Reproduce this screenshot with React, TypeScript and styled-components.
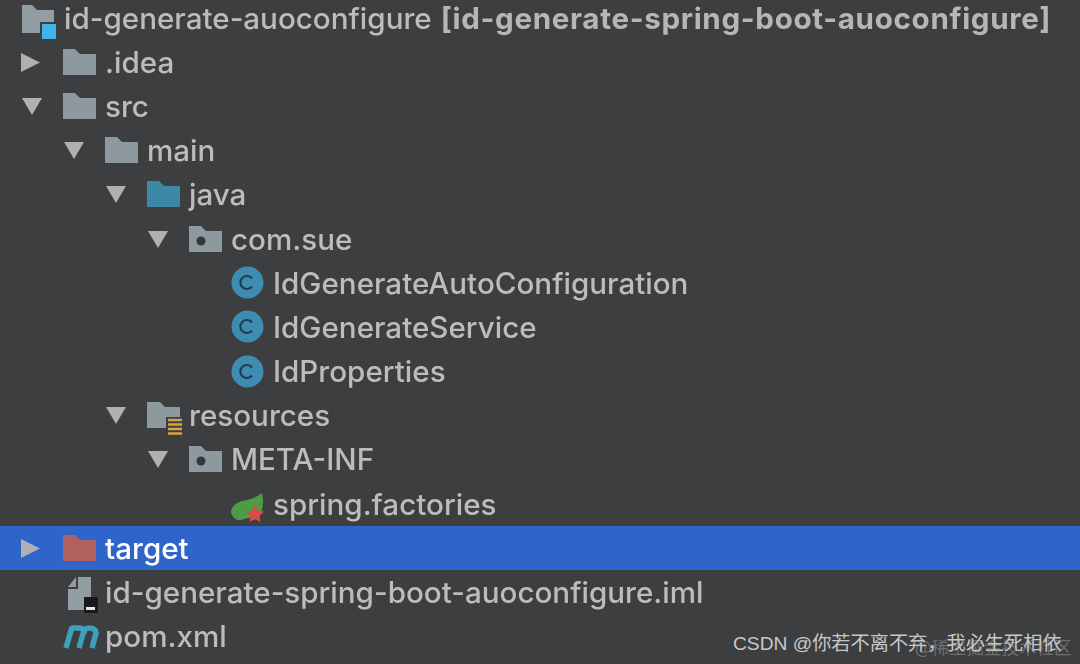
import React from 'react';
import styled, { createGlobalStyle } from 'styled-components';

const GlobalStyle = createGlobalStyle`
  html, body {
    margin: 0;
    height: 100%;
    background: #3c3e40;
  }
`;

const Page = styled.div`
  position: relative;
  width: 1080px;
  height: 664px;
  overflow: hidden;
  background: #3c3e40;
`;

const Tree = styled.ul`
  list-style: none;
  margin: -4.5px 0 0;
  padding: 0;
  filter: blur(0.6px);
  font-family: Inter, 'Liberation Sans', sans-serif;
  font-size: 29.6px;
  font-weight: 500;
  color: #bcbcbc;
`;

const Row = styled.li<{ $indent: number; $selected?: boolean }>`
  display: flex;
  align-items: center;
  height: 44.2px;
  padding-left: ${(p) => 21 + p.$indent * 42}px;
  white-space: nowrap;
  background: ${(p) => (p.$selected ? '#2f65ca' : 'transparent')};
  color: ${(p) => (p.$selected ? '#ffffff' : '#bcbcbc')};
`;

const ArrowSlot = styled.span`
  flex: none;
  display: flex;
  width: 42px;
`;

const IconSlot = styled.span`
  flex: none;
  display: flex;
  width: 42px;
`;

const RootIconSlot = styled(IconSlot)`
  width: 43px;
`;

const Module = styled.b`
  margin-left: 9px;
  font-weight: 700;
  letter-spacing: 0.66px;
  color: #b6b6b6;
`;

const Watermark = styled.div`
  position: absolute;
  left: 733px;
  top: 631px;
  font-family: 'Liberation Sans', 'Noto Sans CJK SC', sans-serif;
  font-size: 19.2px;
  line-height: 26px;
  color: #c8c8c8;
  white-space: nowrap;
`;

const FaintMark = styled.div`
  position: absolute;
  left: 915px;
  top: 634px;
  font-family: 'Noto Sans CJK SC', sans-serif;
  font-size: 17.5px;
  line-height: 26px;
  color: #6c6e70;
  white-space: nowrap;
`;

const Arrow = ({ open }: { open?: boolean }) => (
  <svg width="22" height="22" viewBox="0 0 22 22">
    {open ? <path d="M1 3h20L11 20z" fill="#aeb0b1" /> : <path d="M0 2l19 9.500L0 21z" fill="#aeb0b1" />}
  </svg>
);

const Folder = ({ color = '#8d999f', dot }: { color?: string; dot?: boolean }) => (
  <svg width="33" height="26" viewBox="0 0 33 26">
    <path d="M0 0h12l5 5h16v21H0z" fill={color} />
    {dot && <circle cx="12" cy="15" r="4.500" fill="#33383a" />}
  </svg>
);

const ModuleIcon = () => (
  <svg width="36" height="44" viewBox="0 0 36 44">
    <path d="M1 9h10l5 5h17v23H1z" fill="#929ea4" />
    <rect x="19" y="26" width="17" height="18" fill="#3c3e40" />
    <rect x="21" y="28" width="14" height="15" fill="#40b3e8" />
  </svg>
);

const ResourcesIcon = () => (
  <svg width="36" height="40" viewBox="0 0 36 40">
    <path d="M0 7h13l5 5h15v21H0z" fill="#8d999f" />
    <rect x="19" y="22" width="17" height="18" fill="#3c3e40" />
    <path d="M21 25h14M21 29.500h14M21 34h14M21 38.500h14" stroke="#d6a245" strokeWidth="2.500" />
  </svg>
);

const ClassIcon = () => (
  <svg width="33" height="33" viewBox="0 0 33 33">
    <circle cx="16.500" cy="16.500" r="16" fill="#3e8db0" />
    <path d="M21 12.500a6.500 6.500 0 1 0 0 8" fill="none" stroke="#1e3d56" strokeWidth="2.200" />
  </svg>
);

const SpringIcon = () => (
  <svg width="36" height="40" viewBox="0 0 36 40">
    <path d="M0 28C1 20 8 17 16 16 22 15 27 12 31 9c2 7 1 17-3 24-7 0-12 1-18 3-5 1-9-3-10-8z" fill="#4f9a45" />
    <path d="M24 21l2.800 5.500 6.200 1-4.500 4.500 1 6-5.500-2.800-5.500 2.800 1-6-4.500-4.500 6.200-1z" fill="#d94a4a" />
  </svg>
);

const ImlIcon = () => (
  <svg width="36" height="42" viewBox="0 0 36 42">
    <path d="M15 6h13v33H5V18h10z" fill="#929ea4" />
    <path d="M13 6v10H5z" fill="#929ea4" />
    <rect x="21" y="26" width="14" height="16" rx="1" fill="#17191a" />
    <rect x="23" y="36" width="9" height="3" fill="#e6e6e6" />
  </svg>
);

const MavenIcon = () => (
  <svg width="36" height="28" viewBox="0 0 36 28">
    <path
      d="M3 26L9 5M16 26L21 8M29 26L33 11M8 6h8c4 0 6 2 5 5M21 8c3-3 13-3 12 4"
      fill="none"
      stroke="#3ea0bd"
      strokeWidth="5.500"
    />
  </svg>
);

type Item = {
  label: string;
  indent: number;
  icon: React.ReactNode;
  open?: boolean;
  selected?: boolean;
};

const items: Item[] = [
  { label: '.idea', indent: 0, icon: <Folder />, open: false },
  { label: 'src', indent: 0, icon: <Folder />, open: true },
  { label: 'main', indent: 1, icon: <Folder />, open: true },
  { label: 'java', indent: 2, icon: <Folder color="#3f87a6" />, open: true },
  { label: 'com.sue', indent: 3, icon: <Folder dot />, open: true },
  { label: 'IdGenerateAutoConfiguration', indent: 4, icon: <ClassIcon /> },
  { label: 'IdGenerateService', indent: 4, icon: <ClassIcon /> },
  { label: 'IdProperties', indent: 4, icon: <ClassIcon /> },
  { label: 'resources', indent: 2, icon: <ResourcesIcon />, open: true },
  { label: 'META-INF', indent: 3, icon: <Folder dot />, open: true },
  { label: 'spring.factories', indent: 4, icon: <SpringIcon /> },
  { label: 'target', indent: 0, icon: <Folder color="#b0615f" />, open: false, selected: true },
  { label: 'id-generate-spring-boot-auoconfigure.iml', indent: 0, icon: <ImlIcon /> },
  { label: 'pom.xml', indent: 0, icon: <MavenIcon /> },
];

const App = () => {
  return (
    <Page>
      <GlobalStyle />
      <Tree>
        <Row $indent={0}>
          <RootIconSlot>
            <ModuleIcon />
          </RootIconSlot>
          id-generate-auoconfigure
          <Module>[id-generate-spring-boot-auoconfigure]</Module>
        </Row>
        {items.map((item) => (
          <Row key={item.label} $indent={item.indent} $selected={item.selected}>
            <ArrowSlot>{item.open !== undefined && <Arrow open={item.open} />}</ArrowSlot>
            <IconSlot>{item.icon}</IconSlot>
            {item.label}
          </Row>
        ))}
      </Tree>
      <FaintMark>@稀土掘金技术社区</FaintMark>
      <Watermark>CSDN @你若不离不弃，我必生死相依</Watermark>
    </Page>
  );
};

export default App;
